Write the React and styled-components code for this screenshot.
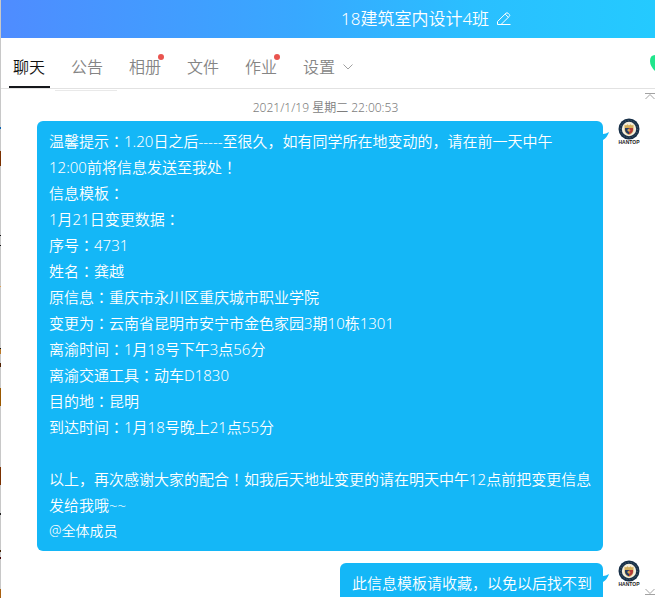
import React from "react";
import styled, { createGlobalStyle } from "styled-components";

const GlobalStyle = createGlobalStyle`
  * { box-sizing: border-box; }
  body {
    margin: 0;
    background: #fff;
    font-family: "Noto Sans", "Noto Sans CJK SC", sans-serif;
    font-weight: 350;
  }
  button { font: inherit; border: 0; padding: 0; background: none; cursor: pointer; }
`;

const Page = styled.div`
  display: grid;
  grid-template-columns: 1px minmax(0, 1fr);
  height: 100vh;
  overflow: hidden;
`;

const DesktopEdge = styled.div`
  background: linear-gradient(
    #c8c8c8 127px, #0a64b4 127px 129px, #c8c8c8 129px 151px,
    #7a3000 151px 166px, #c8c8c8 166px 235px, #111 235px 236px,
    #c8c8c8 236px 245px, #111 245px 246px, #c8c8c8 246px 286px,
    #e0a050 286px 287px, #c8c8c8 287px 348px, #111 348px 349px,
    #b87828 349px 354px, #c8c8c8 354px 363px, #502000 363px 367px,
    #c8c8c8 367px 388px, #9a5800 388px 406px, #c8c8c8 406px 467px,
    #7a3000 467px 485px, #c8c8c8 485px 513px, #222 513px 515px,
    #c8c8c8 515px 550px, #402000 550px 552px, #c8c8c8 552px 557px,
    #400 557px 559px, #c8c8c8 559px 589px, #a86010 589px
  );
`;

const ChatWindow = styled.div`
  display: flex;
  flex-direction: column;
  min-height: 0;
`;

const Header = styled.header`
  display: flex;
  align-items: center;
  flex: none;
  gap: 8px;
  height: 38px;
  padding-left: 340px;
  color: #fff;
  background: linear-gradient(90deg, #4f8cff, #38a8ff 45%, #2abfff 72%, #24caff);
`;

const Title = styled.h1`
  margin: 0;
  font-size: 17px;
  line-height: 24px;
  font-weight: 350;
  white-space: nowrap;
`;

const IconButton = styled.button`
  display: flex;
  color: #fff;
`;

const TabBar = styled.nav`
  display: flex;
  align-items: stretch;
  flex: none;
  gap: 17px;
  height: 51px;
  padding-left: 8px;
  border-bottom: 1px solid #e2e2e2;
`;

const Tab = styled.button`
  position: relative;
  display: flex;
  align-items: center;
  gap: 8px;
  padding: 9px 4px 0;
  min-width: 41px;
  font-size: 16px;
  line-height: 24px;
  color: ${(p) => (p.$active ? "#111" : "#858585")};
  border-bottom: 2px solid ${(p) => (p.$active ? "#15171b" : "transparent")};
`;

const UnreadDot = styled.span`
  position: absolute;
  top: 16px;
  right: 2px;
  width: 6px;
  height: 6px;
  border-radius: 50%;
  background: #e9544f;
`;

const HeartSlot = styled.div`
  display: flex;
  align-items: center;
  margin-left: auto;
`;

const Conversation = styled.main`
  display: grid;
  grid-template-columns: minmax(0, 1fr) 10px;
  flex: 1;
  min-height: 0;
  padding-bottom: 1px;
`;

const MessageList = styled.div`
  display: flex;
  flex-direction: column;
  gap: 12px;
  padding-right: 5px;
  overflow: hidden;
`;

const ListHead = styled.div`
  display: flex;
  flex-direction: column;
  flex: none;
  height: 32px;
  margin-bottom: -12px;
`;

const Shade = styled.div`
  width: 62px;
  height: 1px;
  margin: 1px 0 0 54px;
  background: #e9e9e9;
`;

const Stamp = styled.time`
  padding: 7px 0 0 10px;
  text-align: center;
  font-size: 12px;
  line-height: 20px;
  color: #7d7d7d;
`;

const ScrollRail = styled.div`
  display: flex;
  flex-direction: column;
  justify-content: space-between;
  padding: 4px 0 2px;
`;

const MessageRow = styled.article`
  display: flex;
  justify-content: flex-end;
  align-items: flex-start;
  flex: none;
  gap: 15px;
  padding-left: 36px;
`;

const Bubble = styled.div`
  position: relative;
  flex: ${(p) => (p.$wide ? "1" : "none")};
  padding: 7px 11px 7px 12px;
  border-radius: 6px;
  background: #14b7f7;
  color: #fff;
  font-size: 15px;
  line-height: 26px;
`;

const Tail = styled.svg`
  position: absolute;
  top: 10px;
  left: 100%;
`;

const Line = styled.p`
  margin: 0;
  min-height: 26px;
  white-space: nowrap;
`;

const Mention = styled(Line)`
  font-size: 14px;
`;

const Mark = styled.span`
  font-family: "Noto Sans CJK TC", sans-serif;
`;

const AvatarIcon = styled.svg`
  flex: none;
  margin-top: -3px;
`;

function Marked({ text }) {
  return text.split(/([：！])/).map((part, i) =>
    i % 2 ? <Mark key={i} lang="zh-Hant">{part}</Mark> : part
  );
}

function PencilIcon() {
  return (
    <svg width="14" height="14" viewBox="0 0 14 14" fill="none" stroke="currentColor" strokeWidth="1">
      <path d="M.5 12.5V9.5L9 1.2Q10 .5 11 1.2L12.3 2.5Q13.2 3.5 12.3 4.4L4 12.5M.5 12.5H13.5M8.2 2.2L11.3 5.2" />
    </svg>
  );
}

function ChevronIcon() {
  return (
    <svg width="10" height="6" viewBox="0 0 10 6" fill="none" stroke="#a0a0a0">
      <path d="M.5.5L5 5L9.5.5" />
    </svg>
  );
}

function EdgeArrow({ down }) {
  return (
    <svg width="10" height="7" viewBox="0 0 10 7" fill="none" stroke="#a2a2a2">
      <path d={down ? "M0 6.5H10M.5 1L5 5.5L9.5 1" : "M0 .5H10M.5 6L5 1.5L9.5 6"} />
    </svg>
  );
}

function HeartIcon() {
  return (
    <svg width="5" height="18" viewBox="0 0 5 18">
      <path d="M5 1Q0 1 0 7Q0 12 5 17Z" fill="#20e68c" />
    </svg>
  );
}

function Avatar() {
  return (
    <AvatarIcon width="22" height="27" viewBox="0 0 22 27" role="img" aria-label="头像">
      <circle cx="11" cy="11" r="10.5" fill="#183048" />
      <circle cx="11" cy="11" r="8.6" fill="none" stroke="#526777" strokeDasharray="1 2" />
      <circle cx="11" cy="11" r="7.2" fill="#f4eedc" />
      <path d="M6.5 6.5L8 7.5L9.5 6.2L11 7.5L12.5 6.2L14 7.5L15.5 6.5V12Q15 15.5 11 17Q7 15.5 6.5 12Z" fill="#d4ae5b" />
      <path d="M7 10H11V16.3Q7.3 14.8 7 12Z" fill="#243c64" />
      <path d="M11 10H15V12Q14.7 14.8 11 16.3Z" fill="#b33a3a" />
      <path d="M9 12L11 10.5L12.5 12.5L11 14Z" fill="#d5a650" />
      <text x="11" y="26" textAnchor="middle" fontFamily="Liberation Sans" fontWeight="700" fontSize="5" fill="#222">HANTOP</text>
    </AvatarIcon>
  );
}

function Message({ wide, children }) {
  return (
    <MessageRow>
      <Bubble $wide={wide}>
        {children}
        <Tail width="6" height="10" viewBox="0 0 6 10">
          <path d="M0 3Q3 3 6 1Q4.5 6 0 9Z" fill="#14b7f7" />
        </Tail>
      </Bubble>
      <Avatar />
    </MessageRow>
  );
}

const tabs = [
  { label: "聊天", active: true },
  { label: "公告" },
  { label: "相册", unread: true },
  { label: "文件" },
  { label: "作业", unread: true },
  { label: "设置", menu: true },
];

const notice = [
  "温馨提示：1.20日之后-----至很久，如有同学所在地变动的，请在前一天中午",
  "12:00前将信息发送至我处！",
  "信息模板：",
  "1月21日变更数据：",
  "序号：4731",
  "姓名：龚越",
  "原信息：重庆市永川区重庆城市职业学院",
  "变更为：云南省昆明市安宁市金色家园3期10栋1301",
  "离渝时间：1月18号下午3点56分",
  "离渝交通工具：动车D1830",
  "目的地：昆明",
  "到达时间：1月18号晚上21点55分",
  "",
  "以上，再次感谢大家的配合！如我后天地址变更的请在明天中午12点前把变更信息",
  "发给我哦~~",
];

export default function App() {
  return (
    <Page lang="zh-CN">
      <GlobalStyle />
      <DesktopEdge />
      <ChatWindow>
        <Header>
          <Title>18建筑室内设计4班</Title>
          <IconButton aria-label="编辑群名称"><PencilIcon /></IconButton>
        </Header>
        <TabBar>
          {tabs.map((tab) => (
            <Tab key={tab.label} $active={tab.active}>
              {tab.label}
              {tab.unread && <UnreadDot />}
              {tab.menu && <ChevronIcon />}
            </Tab>
          ))}
          <HeartSlot><HeartIcon /></HeartSlot>
        </TabBar>
        <Conversation>
          <MessageList>
            <ListHead>
              <Shade />
              <Stamp dateTime="2021-01-19T22:00:53">2021/1/19 星期二 22:00:53</Stamp>
            </ListHead>
            <Message wide>
              {notice.map((text, i) => (
                <Line key={i}><Marked text={text} /></Line>
              ))}
              <Mention>@全体成员</Mention>
            </Message>
            <Message>
              <Line><Marked text="此信息模板请收藏，以免以后找不到" /></Line>
            </Message>
          </MessageList>
          <ScrollRail>
            <EdgeArrow />
            <EdgeArrow down />
          </ScrollRail>
        </Conversation>
      </ChatWindow>
    </Page>
  );
}
